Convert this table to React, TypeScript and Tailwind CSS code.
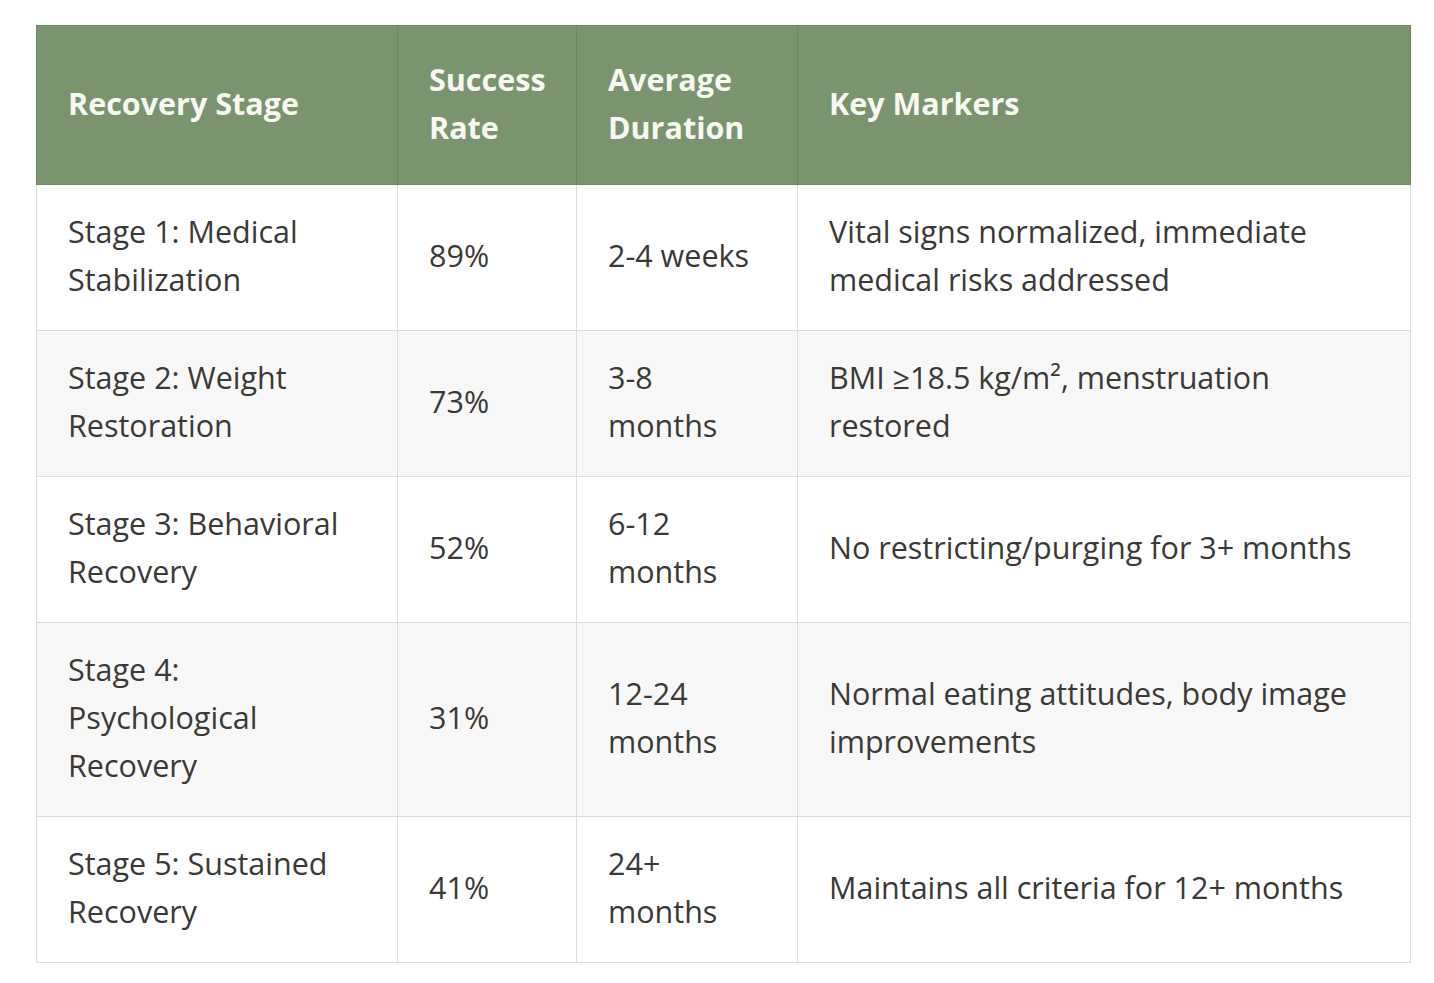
const ROWS = [
  {
    stage: 'Stage 1: Medical Stabilization',
    rate: '89%',
    duration: '2-4 weeks',
    markers: 'Vital signs normalized, immediate medical risks addressed',
  },
  {
    stage: 'Stage 2: Weight Restoration',
    rate: '73%',
    duration: '3-8 months',
    markers: 'BMI ≥18.5 kg/m², menstruation restored',
  },
  {
    stage: 'Stage 3: Behavioral Recovery',
    rate: '52%',
    duration: '6-12 months',
    markers: 'No restricting/purging for 3+ months',
  },
  {
    stage: 'Stage 4: Psychological Recovery',
    rate: '31%',
    duration: '12-24 months',
    markers: 'Normal eating attitudes, body image improvements',
  },
  {
    stage: 'Stage 5: Sustained Recovery',
    rate: '41%',
    duration: '24+ months',
    markers: 'Maintains all criteria for 12+ months',
  },
]

const HEADERS = ['Recovery Stage', 'Success Rate', 'Average Duration', 'Key Markers']

export default function App() {
  return (
    <div
      className="min-h-screen bg-white pt-[25px] pl-[36px]"
      style={{ fontFamily: '"Open Sans", "Noto Sans", sans-serif' }}
    >
      <table className="table-fixed w-[1374px] border-collapse text-[30.5px] leading-[48px]">
        <colgroup>
          <col className="w-[361px]" />
          <col className="w-[179px]" />
          <col className="w-[221px]" />
          <col className="w-[613px]" />
        </colgroup>
        <thead>
          <tr className="bg-[#7a946f]">
            {HEADERS.map((h) => (
              <th
                key={h}
                className="border border-[#6e8864] px-[31px] pt-[29px] pb-[33px] text-left font-bold text-[#f7f8f2] align-middle"
              >
                {h}
              </th>
            ))}
          </tr>
        </thead>
        <tbody>
          {ROWS.map((r, i) => (
            <tr key={r.stage} className={i % 2 === 1 ? 'bg-[#f7f7f7]' : 'bg-white'}>
              {[r.stage, r.rate, r.duration, r.markers].map((v, j) => (
                <td
                  key={j}
                  className="border border-[#dcdcdc] px-[31px] pt-[22px] pb-[27px] align-middle text-[#3b3936]"
                >
                  {v}
                </td>
              ))}
            </tr>
          ))}
        </tbody>
      </table>
    </div>
  )
}
